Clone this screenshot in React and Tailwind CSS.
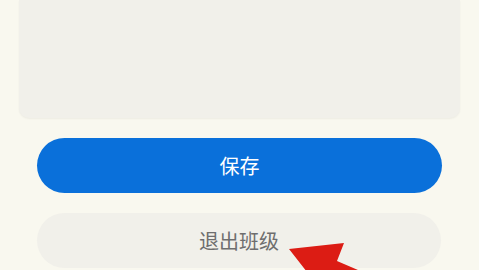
import React from 'react';

const font = { fontFamily: '"Noto Sans CJK SC", "Noto Sans", sans-serif' };

export default function App() {
  return (
    <div className="relative h-[270px] w-[479px] overflow-hidden bg-[#f9f8ef]" style={font}>
      {/* Content card (top cut off) */}
      <div className="mx-[19px] h-[118px] rounded-b-[10px] bg-[#f1f0ea] shadow-[0_1px_2px_rgba(0,0,0,0.05)]" />

      {/* Save */}
      <button className="mx-[37px] mt-5 flex h-[55px] w-[405px] items-center justify-center rounded-full bg-[#0a70da] text-[20px] text-white">
        保存
      </button>

      {/* Leave class */}
      <button className="mx-[37px] mt-5 flex h-[55px] w-[404px] items-center justify-center rounded-full bg-[#f1f0ea] text-[20px] text-[#6e6e6e]">
        退出班级
      </button>

      {/* Red pointer arrow */}
      <svg className="absolute left-0 top-0" width="479" height="270" viewBox="0 0 479 270">
        <polygon points="289,249 344,243 337,261 372,276 360,300 330,282 307,272" fill="#dc1c14" />
      </svg>
    </div>
  );
}
